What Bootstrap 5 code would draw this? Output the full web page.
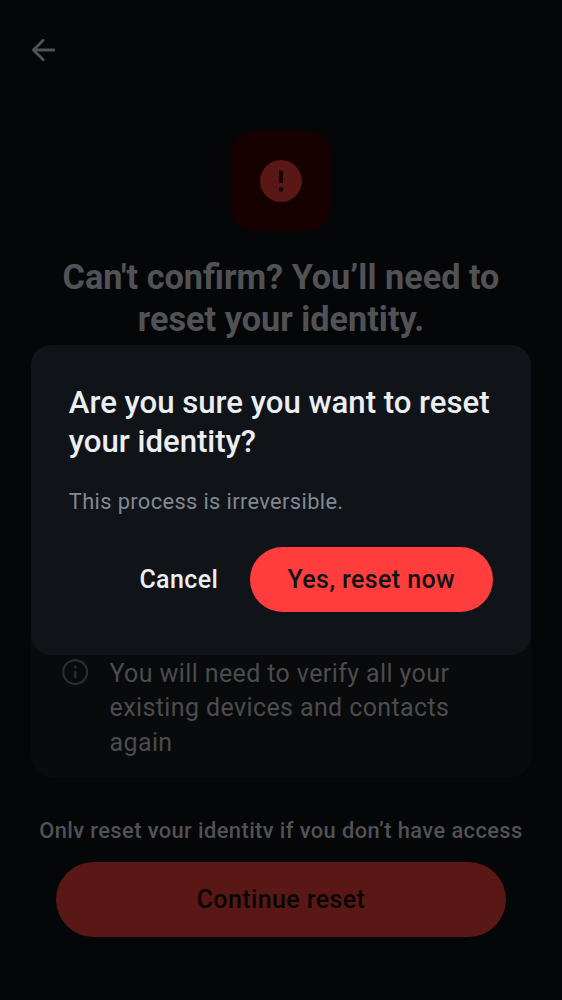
<!DOCTYPE html>
<html lang="en">
<head>
<meta charset="utf-8">
<meta name="viewport" content="width=device-width, initial-scale=1">
<title>Reset identity</title>
<link href="https://cdn.jsdelivr.net/npm/bootstrap@5.3.0/dist/css/bootstrap.min.css" rel="stylesheet">
<style>
  body { background: #050608; color: #515255; font-family: Roboto, sans-serif; }
  .screen { height: 1000px; }
  .topbar { height: 100px; padding-left: 28px; }
  .scroll-area { height: 737.5px; padding: 31px 31px 0; }
  .tile { width: 100px; height: 100px; border-radius: 22px; background: #160000; }
  .headline { font-size: 34.25px; line-height: 42.3px; font-weight: 700; margin-top: 25px; }
  .info-box { height: 412px; margin-top: 25.4px; padding: 0 31px 18px; border-radius: 22px; background: #090a0c; }
  .info-text { font-size: 25px; line-height: 34.3px; letter-spacing: .39px; color: #4b4c4f; margin-left: -.5px; }
  .warning { font-size: 21.85px; line-height: 31.2px; letter-spacing: .42px; font-weight: 500; margin-top: 37px; }
  .cta { width: 450px; height: 75px; margin-top: 24.9px; }
  .cta, .cta:hover { background: #591715; color: #070708; }
  .action { font-size: 25px; line-height: 37px; letter-spacing: .4px; font-weight: 500; border: 0; padding: 0; }
  .modal-dialog.confirm { width: 500px; max-width: 500px; margin: 0 auto; min-height: 1000px; }
  .confirm .modal-content { height: 310px; border: 0; border-radius: 20px; background: #101317; padding: 38px 38px 38px 37.8px; }
  .confirm-title { font-size: 31.2px; letter-spacing: -.03px; line-height: 39px; font-weight: 500; color: #ebeef2; }
  .confirm-copy { font-size: 21.85px; line-height: 31.2px; letter-spacing: .36px; color: #808994; margin-top: 25px; }
  .confirm-actions { margin-top: 29.7px; }
  .cancel, .cancel:hover { color: #ebeef2; margin-right: 31.2px; }
  .accept { width: 243.5px; height: 65.5px; }
  .accept, .accept:hover { background: #ff3d3d; color: #101317; }
</style>
</head>
<body class="overflow-hidden">
<main class="screen d-flex flex-column">
  <header class="topbar d-flex align-items-center">
    <svg width="31" height="31" viewBox="0 0 31 31" fill="none" stroke="#515255" stroke-width="2.8" stroke-linecap="round" stroke-linejoin="round" aria-label="Back"><path d="M25.8 15H6M15.2 5.3L5.4 15l9.8 9.7"/></svg>
  </header>
  <section class="scroll-area overflow-hidden text-center">
    <div class="tile d-flex align-items-center justify-content-center mx-auto">
      <svg width="42" height="42" viewBox="0 0 42 42"><circle cx="21" cy="21" r="21" fill="#591715"/><rect x="19" y="10.6" width="4" height="12.5" rx="1.6" fill="#160000"/><circle cx="21" cy="29.4" r="2.2" fill="#160000"/></svg>
    </div>
    <h1 class="headline mb-0">Can't confirm? You’ll need to<br>reset your identity.</h1>
    <div class="info-box d-flex align-items-end text-start">
      <div class="d-flex align-items-start">
        <svg class="flex-shrink-0" width="48" height="34" viewBox="0 0 48 34"><circle cx="13.2" cy="15" r="11.9" fill="none" stroke="#2b2c32" stroke-width="2.2"/><rect x="12" y="13.7" width="2.5" height="7.4" rx="1" fill="#2b2c32"/><circle cx="13.2" cy="9.9" r="1.4" fill="#2b2c32"/></svg>
        <div class="info-text">You will need to verify all your<br>existing devices and contacts<br>again</div>
      </div>
    </div>
    <p class="warning mb-0 text-nowrap">Only reset your identity if you don’t have access</p>
  </section>
  <button class="btn cta action rounded-pill mx-auto" type="button">Continue reset</button>
</main>
<div class="modal d-block overflow-hidden" tabindex="-1" role="dialog" aria-modal="true">
  <div class="modal-dialog modal-dialog-centered confirm">
    <div class="modal-content">
      <h2 class="confirm-title mb-0">Are you sure you want to reset<br>your identity?</h2>
      <p class="confirm-copy mb-0">This process is irreversible.</p>
      <div class="confirm-actions d-flex align-items-center justify-content-end">
        <button class="btn cancel action" type="button">Cancel</button>
        <button class="btn accept action rounded-pill" type="button">Yes, reset now</button>
      </div>
    </div>
  </div>
</div>
<script src="https://cdn.jsdelivr.net/npm/bootstrap@5.3.0/dist/js/bootstrap.bundle.min.js"></script>
</body>
</html>
